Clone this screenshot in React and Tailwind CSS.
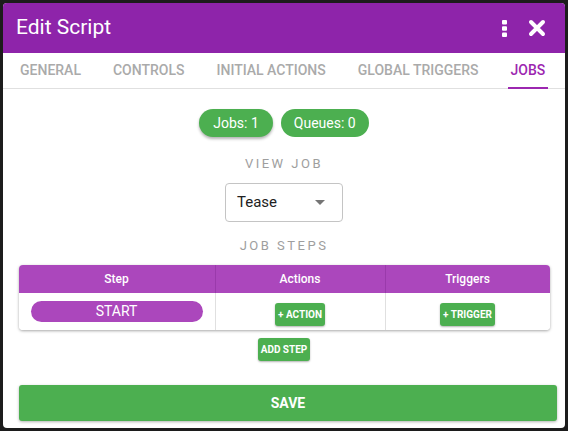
import React, { useState } from "react";

const tabs = ["General", "Controls", "Initial Actions", "Global Triggers", "Jobs"];

const App = () => {
  const [tab] = useState("Jobs");
  const [job] = useState("Tease");

  return (
    <div className="w-[568px] h-[431px] bg-[#1c1c1c] p-[3px] font-['Roboto',sans-serif]">
      <div className="w-[562px] h-[425px] bg-white rounded overflow-hidden flex flex-col">
        {/* Header */}
        <div className="h-[50px] bg-[#8e24aa] flex items-center pl-[13px] pr-[19px] shrink-0">
          <div className="text-white text-[21px] flex-1">Edit Script</div>
          <svg width="5" height="17" viewBox="0 0 5 17" className="mr-[21px]">
            <rect x="0" y="0" width="5" height="4.5" rx="1" fill="white" />
            <rect x="0" y="6.2" width="5" height="4.5" rx="1" fill="white" />
            <rect x="0" y="12.4" width="5" height="4.5" rx="1" fill="white" />
          </svg>
          <svg width="18" height="18" viewBox="0 0 18 18">
            <path d="M3 3 L15 15 M15 3 L3 15" stroke="white" strokeWidth="4" strokeLinecap="round" />
          </svg>
        </div>

        {/* Tabs */}
        <div className="h-[36px] flex items-center border-b border-[#e0e0e0] pl-[17px] shrink-0">
          {tabs.map((t) => (
            <div
              key={t}
              className={
                "h-full flex items-center relative uppercase whitespace-nowrap text-[14px] font-medium mr-[32px] " +
                (t === tab ? "text-[#9c27b0]" : "text-[#aaaaaa]")
              }
            >
              {t}
              {t === tab && (
                <div className="absolute left-[-3px] right-[-3px] bottom-[-1px] h-[2px] bg-[#9c27b0]" />
              )}
            </div>
          ))}
        </div>

        {/* Body */}
        <div className="flex-1 flex flex-col items-center">
          <div className="flex gap-[8px] mt-[20px]">
            <div className="h-[28px] px-[14px] rounded-full bg-[#4caf50] text-white text-[14px] flex items-center shadow-[0_2px_3px_rgba(0,0,0,0.3)]">
              Jobs: 1
            </div>
            <div className="h-[28px] px-[13px] rounded-full bg-[#4caf50] text-white text-[14px] flex items-center">
              Queues: 0
            </div>
          </div>

          <div className="mt-[19px] text-[13px] tracking-[2.5px] text-[#9e9e9e] uppercase leading-[16px]">View Job</div>

          <div className="mt-[11px] w-[118px] h-[39px] border border-[#c4c4c4] rounded flex items-center pl-[11px] pr-[17px]">
            <span className="flex-1 text-[15px] text-[#212121]">{job}</span>
            <svg width="10" height="5" viewBox="0 0 10 5">
              <path d="M0 0 L10 0 L5 5 Z" fill="#757575" />
            </svg>
          </div>

          <div className="mt-[16px] text-[13px] tracking-[2.5px] text-[#9e9e9e] uppercase leading-[16px]">Job Steps</div>

          {/* Table */}
          <div className="mt-[11px] w-[531px] rounded shadow-[0_1px_3px_rgba(0,0,0,0.35)] overflow-hidden">
            <div className="grid grid-cols-[197px_170px_1fr] bg-[#ab47bc] h-[28px] text-white text-[12px] font-medium">
              <div className="flex items-center justify-center border-r border-[#9a3aab]">Step</div>
              <div className="flex items-center justify-center border-r border-[#9a3aab]">Actions</div>
              <div className="flex items-center justify-center">Triggers</div>
            </div>
            <div className="grid grid-cols-[197px_170px_1fr] h-[37px] bg-white">
              <div className="flex items-start justify-center border-r border-[#e0e0e0] pt-[8px]">
                <div className="w-[172px] h-[21px] rounded-full bg-[#ab47bc] text-white text-[14px] flex items-center justify-center">
                  START
                </div>
              </div>
              <div className="flex items-start justify-center border-r border-[#e0e0e0] pt-[10px]">
                <button className="h-[23px] px-[3px] rounded-[3px] bg-[#4caf50] text-white text-[10px] font-bold shadow-[0_1px_2px_rgba(0,0,0,0.3)]">
                  + ACTION
                </button>
              </div>
              <div className="flex items-start justify-center pt-[10px]">
                <button className="h-[23px] px-[3px] rounded-[3px] bg-[#4caf50] text-white text-[10px] font-bold shadow-[0_1px_2px_rgba(0,0,0,0.3)]">
                  + TRIGGER
                </button>
              </div>
            </div>
          </div>

          <button className="mt-[8px] h-[23px] px-[3px] rounded-[3px] bg-[#4caf50] text-white text-[10px] font-bold shadow-[0_1px_2px_rgba(0,0,0,0.3)]">
            ADD STEP
          </button>

          <button className="mt-[24px] self-start ml-[16px] w-[538px] h-[36px] rounded-[3px] bg-[#4caf50] text-white text-[14px] font-bold shadow-[0_1px_3px_rgba(0,0,0,0.3)]">
            SAVE
          </button>
        </div>
      </div>
    </div>
  );
};

export default App;
